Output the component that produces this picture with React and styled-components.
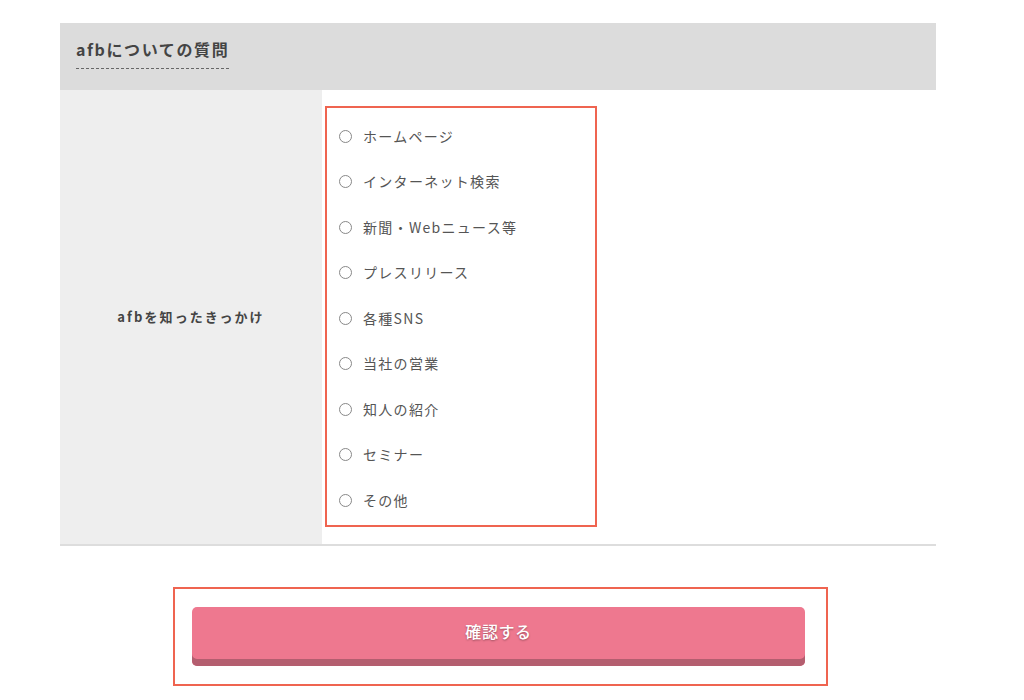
import React from "react";
import styled, { createGlobalStyle } from "styled-components";

const GlobalStyle = createGlobalStyle`
  html, body {
    margin: 0;
    padding: 0;
    background: #fff;
  }
  body {
    font-family: "Noto Sans CJK JP", "Noto Sans", sans-serif;
    color: #555;
  }
`;

const Page = styled.div`
  width: 1024px;
  padding-top: 23px;
`;

const Panel = styled.section`
  margin-left: 60px;
  width: 876px;
`;

const PanelHeader = styled.div`
  background: #dcdcdc;
  height: 67px;
  padding: 14px 0 0 16px;
  box-sizing: border-box;
`;

const PanelTitle = styled.h2`
  display: inline-block;
  margin: 0;
  font-size: 16px;
  font-weight: 700;
  letter-spacing: 1.6px;
  color: #444;
  line-height: 25px;
  padding-bottom: 6px;
  border-bottom: 1px dashed #666;
`;

const Row = styled.div`
  display: flex;
  border-bottom: 2px solid #dddddd;
`;

const LabelCell = styled.div`
  width: 262px;
  background: #eeeeee;
  display: flex;
  align-items: center;
  justify-content: center;
  font-size: 13px;
  font-weight: 700;
  letter-spacing: 2.1px;
  color: #444;
`;

const FieldCell = styled.div`
  flex: 1;
  padding: 16px 0 17px 3px;
`;

const Highlight = styled.div`
  border: 2px solid #ef6450;
  box-sizing: border-box;
  width: ${(p) => p.$width}px;
`;

const OptionList = styled.ul`
  list-style: none;
  margin: 0;
  padding: 5px 0 2px 12px;
`;

const Option = styled.li`
  height: 45.5px;
  display: flex;
  align-items: center;
  gap: 11px;
  font-size: 14px;
  letter-spacing: 1.3px;
  color: #555;
`;

const Radio = styled.span`
  width: 11px;
  height: 11px;
  border: 1px solid #888;
  border-radius: 50%;
  flex-shrink: 0;
  margin-top: 1px;
`;

const Actions = styled.div`
  display: flex;
  justify-content: center;
  padding: 41px 0 0 5px;
`;

const ActionBox = styled(Highlight)`
  padding: 18px 17px 18px;
`;

const SubmitButton = styled.button`
  display: block;
  width: 613px;
  height: 59px;
  border: none;
  border-radius: 5px;
  background: #ee788f;
  box-shadow: inset 0 -7px 0 #b45e6f;
  padding: 0 0 11px;
  color: #fff;
  font-family: "Noto Sans CJK JP", sans-serif;
  font-size: 16px;
  font-weight: 500;
  letter-spacing: 0.6px;
  text-shadow: 0 1px 2px rgba(0, 0, 0, 0.35);
  cursor: pointer;
`;

const options = [
  "ホームページ",
  "インターネット検索",
  "新聞・Webニュース等",
  "プレスリリース",
  "各種SNS",
  "当社の営業",
  "知人の紹介",
  "セミナー",
  "その他",
];

export default function App() {
  return (
    <Page>
      <GlobalStyle />
      <Panel>
        <PanelHeader>
          <PanelTitle>afbについての質問</PanelTitle>
        </PanelHeader>
        <Row>
          <LabelCell>afbを知ったきっかけ</LabelCell>
          <FieldCell>
            <Highlight $width={272}>
              <OptionList>
                {options.map((o) => (
                  <Option key={o}>
                    <Radio />
                    {o}
                  </Option>
                ))}
              </OptionList>
            </Highlight>
          </FieldCell>
        </Row>
        <Actions>
          <ActionBox $width={655}>
            <SubmitButton>確認する</SubmitButton>
          </ActionBox>
        </Actions>
      </Panel>
    </Page>
  );
}
